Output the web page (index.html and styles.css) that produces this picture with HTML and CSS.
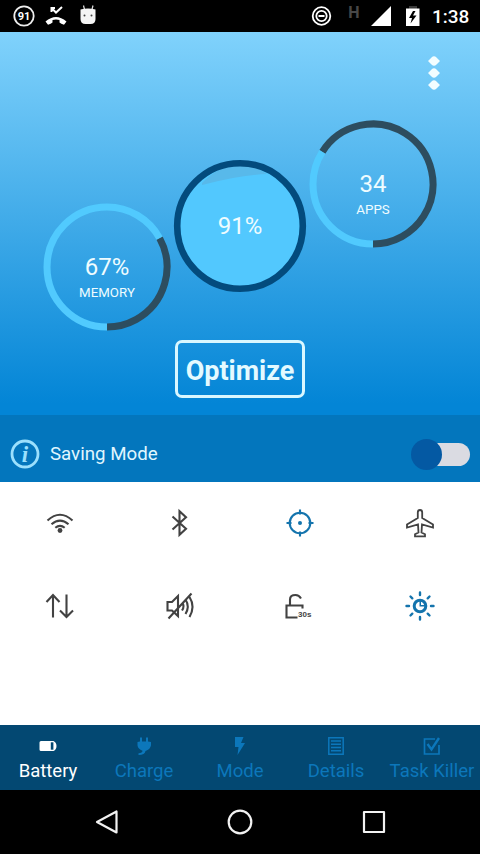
FILE: index.html
```html
<!DOCTYPE html>
<html lang="en">
<head>
    <meta charset="UTF-8" />
    <meta name="viewport" content="width=device-width, initial-scale=1.0"/>
    <title>Battery</title>
    <link rel="stylesheet" href="styles.css">
</head>
<body>
    <div class="screen">
        <div class="status-bar">
            <svg width="120" height="32" viewBox="0 0 120 32">
                <circle cx="24" cy="16" r="9.7" fill="none" stroke="#eee" stroke-width="1.8"/>
                <text x="24" y="20" class="status-count">91</text>
                <path d="M51.5 8l4.500 4.500L62 7M51.500 12V8H55" fill="none" stroke="#fff" stroke-width="2"/>
                <path d="M45.500 21.500q10.500-9 21 0l-2.500 3.200q-3-.7-4.500-2.200v-2.500q-3.500-1-7 0v2.500q-1.500 1.500-4.500 2.200z" fill="#fff"/>
                <path d="M83.500 5.500l1 4M93 5.500l-1 4" stroke="#ddd" stroke-width="1.200"/>
                <path d="M80.500 9.500q7.500-2 15 0v9.500q0 5-5 5h-5q-5 0-5-5z" fill="#f5f5f5"/>
                <circle cx="84.500" cy="15.500" r="1" fill="#444"/>
                <circle cx="91.500" cy="15.500" r="1" fill="#444"/>
            </svg>
            <div class="status-right">
                <svg width="122" height="32" viewBox="306 0 122 32">
                    <circle cx="321.500" cy="16" r="8.800" fill="none" stroke="#fff" stroke-width="1.800"/>
                    <circle cx="321.500" cy="16" r="5.200" fill="none" stroke="#fff" stroke-width="1.800"/>
                    <path d="M318.500 16h6" stroke="#fff" stroke-width="2"/>
                    <text x="354" y="17.500" class="status-net">H</text>
                    <path d="M391 6v20h-20z" fill="#fff"/>
                    <path d="M409 6h8v3h-8z" fill="#3a3a3a"/>
                    <path d="M406 8.500h13.500V26H406z" fill="#fff"/>
                    <path d="M413 11l-4 7h3l-1.500 5.500 6-8h-3.500l2.500-4.500z" fill="#000"/>
                </svg>
                <span class="clock">1:38</span>
            </div>
        </div>

        <div class="hero">
            <div class="menu">
                <svg width="14" height="36" viewBox="0 0 14 36" fill="#f2fdff">
                    <path d="M1 6l3.500-3.500Q7 0 9.500 2.500L13 6 9.500 9.500Q7 12 4.500 9.500zM1 18l3.500-3.500Q7 12 9.500 14.500L13 18l-3.500 3.500Q7 24 4.500 21.500zM1 30l3.500-3.500Q7 24 9.500 26.500L13 30l-3.500 3.500Q7 36 4.500 33.500z"/>
                </svg>
            </div>
            <div class="gauges">
                <svg class="gauge memory" viewBox="0 0 128 128">
                    <circle class="ring-back" cx="64" cy="64" r="60" pathLength="100" stroke-dasharray="33 67" transform="rotate(-28.800 64 64)"/>
                    <circle class="ring-value" cx="64" cy="64" r="60" pathLength="100" stroke-dasharray="67 33" transform="rotate(90 64 64)"/>
                    <text x="64" y="72" class="gauge-value">67%</text>
                    <text x="64" y="94" class="gauge-label">MEMORY</text>
                </svg>
                <svg class="gauge battery" viewBox="0 0 134 134">
                    <circle cx="67" cy="67" r="61" fill="#52c8fe"/>
                    <path d="M29 24Q46 6 67 6q14 0 27 9-28 1-65 11z" fill="#58b9ea"/>
                    <circle cx="67" cy="67" r="62.800" fill="none" stroke="#034b7d" stroke-width="6.600"/>
                    <text x="67" y="74.500" class="gauge-value">91%</text>
                </svg>
                <svg class="gauge apps" viewBox="0 0 128 128">
                    <circle class="ring-back" cx="64" cy="64" r="60" pathLength="100" stroke-dasharray="66 34" transform="rotate(212.400 64 64)"/>
                    <circle class="ring-value" cx="64" cy="64" r="60" pathLength="100" stroke-dasharray="34 66" transform="rotate(90 64 64)"/>
                    <text x="64" y="72" class="gauge-value">34</text>
                    <text x="64" y="94" class="gauge-label">APPS</text>
                </svg>
            </div>
            <button class="optimize">Optimize</button>
        </div>

        <div class="saving">
            <svg width="30" height="30" viewBox="0 0 30 30">
                <circle cx="15" cy="15" r="13" fill="none" stroke="#9be0fd" stroke-width="2.800"/>
                <text x="15" y="22.500" class="info-i">i</text>
            </svg>
            <span class="saving-label">Saving Mode</span>
            <div class="toggle"><div class="thumb"></div><div class="track"></div></div>
        </div>

        <div class="switches">
            <svg class="switch" viewBox="0 0 32 32">
                <path d="M3.500 13.500Q16 2 28.500 13.500M7.500 17.300q8.500-7.500 17 0M11.300 20.800q4.700-4 9.400 0"/>
                <circle cx="16" cy="23.500" r="2.400" class="solid"/>
            </svg>
            <svg class="switch" viewBox="0 0 32 32">
                <path d="M8.500 9.500L22 21.800l-6.500 6V4.200l6.500 6L8.500 22.500"/>
            </svg>
            <svg class="switch on" viewBox="0 0 32 32">
                <circle cx="16" cy="16" r="10.300"/>
                <path d="M16 2.500v5M16 24.500v5M2.500 16h5M24.500 16h5"/>
                <circle cx="16" cy="16" r="2" class="solid"/>
            </svg>
            <svg class="switch" viewBox="0 0 32 32">
                <path class="thin" d="M13.800 11V5.500q0-2.500 2.200-2.500t2.200 2.500V11l10.800 6.500v3L18 17.500l-.5 8 3.500 1.800v2H11v-2l3.500-1.800-.5-8-11 3v-3z"/>
            </svg>
            <svg class="switch" viewBox="0 0 32 32">
                <path d="M9 27.500V5M2.500 12L9 5l6.500 7M22.500 4.500V27M16 20.500l6.500 6.500 6.500-6.500"/>
            </svg>
            <svg class="switch" viewBox="0 0 32 32">
                <path d="M3.500 12H8l6-6v20l-6-5.500H3.500zM4.500 28.500L27.500 3.500M18 12.500q3 3.500 0 8M21.500 9.500q4.500 7 0 14.500M25.500 7q6 9.500 0 20"/>
            </svg>
            <svg class="switch" viewBox="0 0 32 32">
                <path d="M6 15V9.500Q6 5 11.500 5q3.500 0 5.500 3.500M13.500 27.500H2.500V15.500h16v3"/>
                <text x="14" y="26.500" class="lock-time">30s</text>
            </svg>
            <svg class="switch on" viewBox="0 0 32 32">
                <circle cx="16" cy="16" r="5.800" class="sun"/>
                <path class="solid" d="M15.500 10.500h1.500V15h4.500v1.500h-6z"/>
                <path class="rays" d="M16 2.500v2.500M16 27v2.500M2.500 16H5M27 16h2.500M6.500 6.500l1.800 1.800M23.700 23.700l1.800 1.800M25.500 6.500l-1.800 1.800M8.300 23.700l-1.800 1.800"/>
            </svg>
        </div>

        <div class="tabs">
            <div class="tab active">
                <svg width="20" height="20" viewBox="0 0 20 20">
                    <path fill="currentColor" d="M3 5h12.500q3 1.500 3 5t-3 5H3q-1.500 0-1.500-1.500v-7Q1.500 5 3 5z"/>
                    <path fill="#034872" d="M12.800 6.300h2.600v7.400h-2.600z"/>
                </svg>
                <span>Battery</span>
            </div>
            <div class="tab">
                <svg width="20" height="20" viewBox="0 0 20 20">
                    <path fill="currentColor" d="M6 1.500h2V5.500h4V1.500h2V5.500l3 .5v3.500q-1 4-5.500 5.500-.5 4-7 4v-1.800q4-.2 4-2.400Q4 13 3.500 9.500V6L6 5.500z"/>
                </svg>
                <span>Charge</span>
            </div>
            <div class="tab">
                <svg width="20" height="20" viewBox="0 0 20 20">
                    <path fill="currentColor" d="M5 1h8.500L11 7h4L7.500 19l1-8H5z"/>
                </svg>
                <span>Mode</span>
            </div>
            <div class="tab">
                <svg width="20" height="20" viewBox="0 0 20 20">
                    <path fill="none" stroke="currentColor" stroke-width="1.500" d="M2.800 1.800h14.400v16.400H2.800zM5 5h10M5 8.200h10M5 11.400h10M5 14.800h10"/>
                </svg>
                <span>Details</span>
            </div>
            <div class="tab">
                <svg width="20" height="20" viewBox="0 0 20 20">
                    <path fill="none" stroke="currentColor" stroke-width="1.700" d="M13 3H2.500v15h14.500V9"/>
                    <path fill="none" stroke="currentColor" stroke-width="2.400" d="M5.500 8l4 5.500L17 2"/>
                </svg>
                <span>Task Killer</span>
            </div>
        </div>

        <div class="nav-bar">
            <svg width="30" height="30" viewBox="0 0 30 30"><path d="M24.500 4.500v21L5 15z"/></svg>
            <svg width="30" height="30" viewBox="0 0 30 30"><circle cx="15" cy="15" r="11.300"/></svg>
            <svg width="30" height="30" viewBox="0 0 30 30"><path d="M5 5h20v20H5z"/></svg>
        </div>
    </div>
</body>
</html>
```

FILE: styles.css
```css
body { margin: 0; font-family: Roboto, "Liberation Sans", sans-serif; }
svg { display: block; flex-shrink: 0; }
.screen { width: 480px; height: 854px; display: flex; flex-direction: column; overflow: hidden; background-color: #fff; }

/* Status bar */
.status-bar { height: 32px; background-color: #000; display: flex; justify-content: space-between; }
.status-right { display: flex; align-items: center; padding-right: 12px; gap: 4px; }
.status-count { font-size: 11px; font-weight: bold; fill: #fff; text-anchor: middle; }
.status-net { font-size: 16px; font-weight: bold; fill: #484848; text-anchor: middle; }
.clock { color: #fff; font-size: 19px; font-weight: 500; width: 36px; white-space: nowrap; }

/* Gauges */
.hero { height: 383px; display: flex; flex-direction: column; align-items: center; background: linear-gradient(#80d2fc, #0385d6 97%); }
.menu { align-self: flex-end; padding: 23px 39px 0 0; height: 36px; }
.gauges { align-self: stretch; display: flex; align-items: flex-start; padding-left: 42.5px; height: 249px; }
.gauge { width: 128px; height: 128px; }
.memory { margin-top: 112px; }
.battery { width: 134px; height: 134px; margin: 67.5px 2px 0 2.5px; }
.apps { margin-top: 29px; }
.ring-back, .ring-value { fill: none; stroke-width: 7; }
.ring-back { stroke: #2d4d5f; }
.ring-value { stroke: #51cafe; }
.gauge-value { font-size: 24px; fill: #effcff; text-anchor: middle; }
.gauge-label { font-size: 13.3px; fill: #effcff; text-anchor: middle; }
.optimize { width: 130px; height: 58px; box-sizing: border-box; padding: 4px 0 0; border: 3px solid #d9f7ff; border-radius: 7px; background: none; color: #e4faff; font: bold 27px Roboto, sans-serif; }

/* Saving mode row */
.saving { height: 67px; box-sizing: border-box; padding: 11px 10px 0; display: flex; align-items: center; background-color: #0376bd; }
.info-i { font: italic bold 23px "Liberation Serif", serif; fill: #9be0fd; text-anchor: middle; }
.saving-label { margin-left: 10px; color: #e0f6ff; font-size: 18.7px; flex: 1; }
.toggle { display: flex; align-items: center; }
.thumb { width: 31px; height: 31px; border-radius: 50%; background-color: #0459a3; z-index: 1; }
.track { width: 43px; height: 23px; margin-left: -15px; border-radius: 12px; background-color: #dadbe2; }

/* Quick switches */
.switches { height: 243px; box-sizing: border-box; padding-top: 25px; display: grid; grid-template-columns: repeat(4, 1fr); grid-auto-rows: 32px; row-gap: 51px; justify-items: center; }
.switch { width: 32px; height: 32px; overflow: visible; fill: none; stroke: #424242; stroke-width: 2.1; color: #424242; }
.switch.on { stroke: #1474ad; color: #1474ad; }
.switch .solid { fill: currentColor; stroke: none; }
.switch .thin { stroke-width: 1.8; }
.sun { stroke-width: 3; }
.rays { stroke-width: 2.4; stroke-linecap: round; }
.lock-time { font: bold 8px "Liberation Sans", sans-serif; fill: #444; stroke: none; }

/* Tabs */
.tabs { height: 65px; display: grid; grid-template-columns: repeat(5, 1fr); background-color: #034872; }
.tab { display: flex; flex-direction: column; align-items: center; padding-top: 11px; color: #0c77bb; font-size: 18.5px; line-height: 22px; white-space: nowrap; }
.tab span { margin-top: 4px; }
.tab.active { color: #fff; }

.nav-bar { height: 64px; display: flex; justify-content: center; gap: 103.5px; align-items: center; background-color: #000; }
.nav-bar svg { fill: none; stroke: #f2f2f2; stroke-width: 2.2; stroke-linejoin: round; }
```
